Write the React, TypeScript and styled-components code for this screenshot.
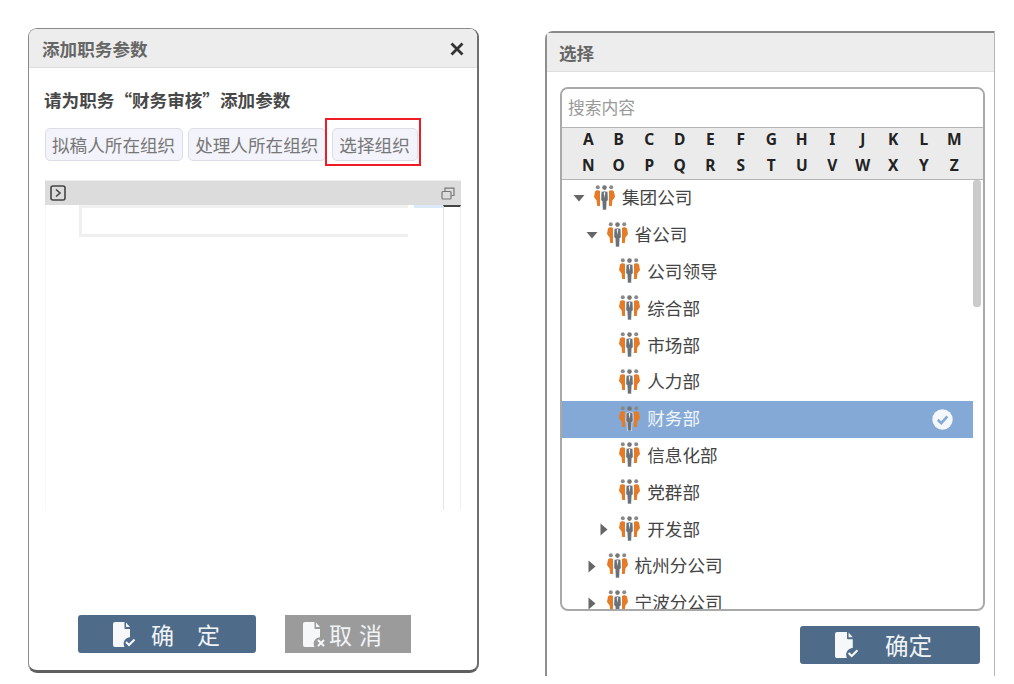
import React from "react";
import styled, { createGlobalStyle } from "styled-components";

const Global = createGlobalStyle`
  html, body { margin: 0; padding: 0; background: #fff; }
  body { font-family: "Noto Sans CJK SC", "Noto Sans", sans-serif; }
`;

const Page = styled.div`
  width: 1014px;
  height: 684px;
  box-sizing: border-box;
  padding: 28px 0 0 28px;
  display: flex;
  align-items: flex-start;
  overflow: hidden;
`;

const EditDialog = styled.section`
  width: 451px;
  height: 645px;
  box-sizing: border-box;
  display: flex;
  flex-direction: column;
  border: 1px solid #8a8a8a;
  border-right: 2px solid #6f6f6f;
  border-bottom: 3px solid #5f5f5f;
  border-radius: 9px;
  overflow: hidden;
  background: #fff;
`;

const PickDialog = styled.section`
  width: 450px;
  height: 645px;
  margin: 3px 0 0 66px;
  box-sizing: border-box;
  display: flex;
  flex-direction: column;
  border-left: 2px solid #8e8e8e;
  border-top: 2px solid #8a8a8a;
  border-right: 1px solid #b5b5b5;
  border-top-left-radius: 8px;
  background: #fff;
`;

const Header = styled.header<{ $inset: number }>`
  height: 39px;
  flex: none;
  box-sizing: border-box;
  background: #ededed;
  border-bottom: 1px solid #dedede;
  padding: 0 13px 0 ${(p) => p.$inset}px;
  display: flex;
  align-items: center;
  justify-content: space-between;
`;

const Title = styled.h2`
  margin: 0;
  font-size: 17.6px;
  font-weight: 700;
  color: #666;
`;

const CloseButton = styled.button`
  border: 0;
  padding: 0;
  margin: 2px 0 0 0;
  background: none;
  display: flex;
`;

const EditBody = styled.div`
  flex: 1;
  display: flex;
  flex-direction: column;
  padding: 20px 0 0 15px;
`;

const Prompt = styled.p`
  margin: 0;
  height: 24px;
  line-height: 24px;
  font-size: 17.6px;
  font-weight: 700;
  color: #484848;
`;

const ChipRow = styled.div`
  display: flex;
  gap: 5px;
  margin: 16px 0 0 1px;
`;

const Chip = styled.button<{ $marked?: boolean }>`
  position: relative;
  height: 33px;
  box-sizing: border-box;
  padding: 0 7px 0 6px;
  margin-left: ${(p) => (p.$marked ? 1 : 0)}px;
  border: 1px solid #dddde8;
  border-radius: 5px;
  background: #f3f3fb;
  color: #777;
  font-family: inherit;
  font-size: 17.6px;
  line-height: 30px;
  white-space: nowrap;
  ${(p) =>
    p.$marked &&
    `&::after {
      content: "";
      position: absolute;
      inset: -11px -4px -6px -8px;
      border: 2px solid #ee1c25;
    }`}
`;

const Panel = styled.div`
  width: 416px;
  height: 330px;
  margin: 19px 0 0 1px;
  display: flex;
  flex-direction: column;
`;

const PanelBar = styled.div`
  height: 25px;
  flex: none;
  box-sizing: border-box;
  border-top: 1px solid #f0f0f0;
  background: #dcdcdc;
  padding: 0 6px 0 5px;
  display: flex;
  align-items: center;
  justify-content: space-between;
`;

const PanelBody = styled.div`
  flex: 1;
  display: flex;
  border-left: 1px solid #f6f6f6;
`;

const Canvas = styled.div`
  flex: 1;
  display: flex;
  align-items: flex-start;
`;

const CanvasFrame = styled.div`
  width: 329px;
  height: 32px;
  box-sizing: border-box;
  margin-left: 33px;
  border-top: 3px solid #f1f1f1;
  border-left: 3px solid #efefef;
  border-bottom: 3px solid #efefef;
`;

const CanvasMark = styled.div`
  width: 29px;
  height: 3px;
  margin-left: 6px;
  background: #dce9fb;
`;

const SideRail = styled.div`
  width: 18px;
  flex: none;
  box-sizing: border-box;
  border-left: 1px solid #e6e6e6;
  border-right: 1px solid #efefef;
  border-top: 2px solid #444;
`;

const Actions = styled.div`
  margin: auto 0 17px 34px;
  display: flex;
  gap: 29px;
`;

const ActionButton = styled.button<{ $width: number; $tone: "blue" | "gray" }>`
  width: ${(p) => p.$width}px;
  height: 38px;
  border: 0;
  border-radius: ${(p) => (p.$tone === "blue" ? 3 : 0)}px;
  background: ${(p) => (p.$tone === "blue" ? "#4e6b89" : "#9b9b9b")};
  color: #f1f4f7;
  font-family: inherit;
  display: flex;
  align-items: center;
  padding: 0;
`;

const ConfirmWide = styled.span`
  font-size: 23px;
  letter-spacing: 23px;
  margin-left: 16px;
  line-height: 38px;
`;

const CancelLabel = styled.span`
  font-size: 23px;
  letter-spacing: 7px;
  margin-left: 4px;
  line-height: 38px;
`;

const ConfirmTight = styled.span`
  font-size: 23.5px;
  margin-left: 27px;
  line-height: 38px;
`;

const IconSlot = styled.span<{ $left: number }>`
  display: flex;
  margin-left: ${(p) => p.$left}px;
`;

const PickBody = styled.div`
  flex: 1;
  display: flex;
  flex-direction: column;
  padding: 15px 0 0 13px;
`;

const PickFrame = styled.div`
  width: 425px;
  height: 524px;
  box-sizing: border-box;
  border: 2px solid #a9a9a9;
  border-radius: 8px;
  display: flex;
  flex-direction: column;
  overflow: hidden;
`;

const SearchInput = styled.input`
  height: 38px;
  flex: none;
  box-sizing: border-box;
  border: 0;
  outline: 0;
  padding: 0 6px 2px;
  font-family: inherit;
  font-size: 16.8px;
  &::placeholder { color: #999; opacity: 1; }
`;

const AlphaGrid = styled.div`
  height: 53px;
  flex: none;
  box-sizing: border-box;
  background: #ebebeb;
  border-top: 1px solid #b5b5b5;
  border-bottom: 1px solid #b5b5b5;
  padding: 0 0 0 11px;
  display: grid;
  grid-template-columns: repeat(13, 30.5px);
  grid-auto-rows: 25.5px;
`;

const AlphaKey = styled.span`
  font-family: "Noto Sans", sans-serif;
  font-size: 15.5px;
  font-weight: 700;
  color: #222;
  text-align: center;
  line-height: 22px;
`;

const TreeArea = styled.div`
  flex: 1;
  min-height: 0;
  display: flex;
`;

const TreeList = styled.ul`
  width: 411px;
  flex: none;
  margin: 0;
  padding: 0;
  list-style: none;
  overflow: hidden;
`;

const TreeRow = styled.li<{ $level: number; $selected?: boolean }>`
  height: 36.8px;
  box-sizing: border-box;
  padding-left: ${(p) => 11 + p.$level * 12.6}px;
  padding-right: 20px;
  display: flex;
  align-items: center;
  background: ${(p) => (p.$selected ? "#84a9d6" : "transparent")};
  color: ${(p) => (p.$selected ? "#f2f6fb" : "#444")};
  font-size: 17.6px;
`;

const CaretSlot = styled.span`
  width: 21px;
  flex: none;
  display: flex;
`;

const RowLabel = styled.span`
  margin: -3px 0 0 7px;
  flex: 1;
  white-space: nowrap;
`;

const ScrollTrack = styled.div`
  width: 8px;
  flex: none;
`;

const ScrollThumb = styled.div`
  height: 127px;
  background: #cbcbcb;
  border-radius: 3px;
`;

const PickActions = styled.div`
  margin: 15px 0 0 240px;
  display: flex;
`;

const People = () => (
  <svg width="21" height="25" viewBox="0 0 21 25" style={{ flex: "none", marginTop: -2 }}>
    <circle cx="3.8" cy="2.2" r="2" fill="#8a8a8a" />
    <circle cx="10.5" cy="2.6" r="2.3" fill="#777" />
    <circle cx="17.2" cy="2.2" r="2" fill="#8a8a8a" />
    <path d="M1 6.5 C2.2 4.8 5 4.8 6 6 L6 21 L3.2 21 L2.6 15.5 L0 12 Z" fill="#e57b26" />
    <path d="M20 6.5 C18.8 4.8 16 4.8 15 6 L15 21 L17.8 21 L18.4 15.5 L21 12 Z" fill="#e57b26" />
    <path d="M7.2 6.8 Q10.5 5 13.8 6.8 L14.2 15.5 L12.9 16 L12.4 25 L8.6 25 L8.1 16 L6.8 15.5 Z" fill="#68707a" stroke="#fff" strokeWidth="0.6" />
    <path d="M10.5 6.2 L11.3 8 L10.5 13 L9.7 8 Z" fill="#e9ecef" />
  </svg>
);

const CaretDown = () => (
  <svg width="12" height="8" viewBox="0 0 12 8"><path d="M0.5 1 H11.5 L6 7.5 Z" fill="#666" /></svg>
);

const CaretRight = () => (
  <svg width="8" height="13" viewBox="0 0 8 13" style={{ marginLeft: 2 }}><path d="M0.5 0.5 V12.5 L7.5 6.5 Z" fill="#666" /></svg>
);

const CheckBadge = () => (
  <svg width="21" height="21" viewBox="0 0 21 21" style={{ flex: "none" }}>
    <circle cx="10.5" cy="10.5" r="10.2" fill="#f4f7fb" />
    <path d="M5.8 10.8 L9.3 14.2 L15.4 7.4" fill="none" stroke="#84a9d6" strokeWidth="2.6" />
  </svg>
);

const DocIcon = ({ badge, size = 22 }: { badge: "check" | "cross"; size?: number }) => (
  <svg width={size} height={(size * 25) / 22} viewBox="0 0 22 25">
    <path d="M2 0 H11.5 V6 Q11.5 7 12.5 7 H17 V15.3 A6.5 6.5 0 0 0 11.5 25 H2 Q0 25 0 23 V2 Q0 0 2 0 Z" fill="#f6f7f8" />
    <path d="M13 0.5 L17 5 H13 Z" fill="#f6f7f8" />
    {badge === "check" ? (
      <path d="M13 20 L16 23 L21.5 17.5" fill="none" stroke="#f6f7f8" strokeWidth="2" />
    ) : (
      <path d="M15 18 L21 24 M21 18 L15 24" fill="none" stroke="#f6f7f8" strokeWidth="2" />
    )}
  </svg>
);

const tree: { name: string; level: number; caret?: "down" | "right"; selected?: boolean }[] = [
  { name: "集团公司", level: 0, caret: "down" },
  { name: "省公司", level: 1, caret: "down" },
  { name: "公司领导", level: 2 },
  { name: "综合部", level: 2 },
  { name: "市场部", level: 2 },
  { name: "人力部", level: 2 },
  { name: "财务部", level: 2, selected: true },
  { name: "信息化部", level: 2 },
  { name: "党群部", level: 2 },
  { name: "开发部", level: 2, caret: "right" },
  { name: "杭州分公司", level: 1, caret: "right" },
  { name: "宁波分公司", level: 1, caret: "right" },
];

export default function App() {
  return (
    <Page>
      <Global />
      <EditDialog>
        <Header $inset={13}>
          <Title>添加职务参数</Title>
          <CloseButton aria-label="关闭">
            <svg width="14" height="14" viewBox="0 0 14 14">
              <path d="M1.5 1.5 L12.5 12.5 M12.5 1.5 L1.5 12.5" stroke="#333" strokeWidth="2.8" />
            </svg>
          </CloseButton>
        </Header>
        <EditBody>
          <Prompt>请为职务“财务审核”添加参数</Prompt>
          <ChipRow>
            <Chip>拟稿人所在组织</Chip>
            <Chip>处理人所在组织</Chip>
            <Chip $marked>选择组织</Chip>
          </ChipRow>
          <Panel>
            <PanelBar>
              <svg width="16" height="16" viewBox="0 0 16 16">
                <rect x="1" y="1" width="14" height="14" rx="2" fill="none" stroke="#444" strokeWidth="1.6" />
                <path d="M6 4.5 L10 8 L6 11.5" fill="none" stroke="#444" strokeWidth="1.6" />
              </svg>
              <svg width="14" height="13" viewBox="0 0 14 13">
                <rect x="1" y="4.5" width="9" height="7.5" rx="1" fill="none" stroke="#777" strokeWidth="1.2" />
                <path d="M4 4 V1.2 H13 V8.5 H10.5" fill="none" stroke="#777" strokeWidth="1.2" />
              </svg>
            </PanelBar>
            <PanelBody>
              <Canvas>
                <CanvasFrame />
                <CanvasMark />
              </Canvas>
              <SideRail />
            </PanelBody>
          </Panel>
          <Actions>
            <ActionButton $width={178} $tone="blue">
              <IconSlot $left={35}>
                <DocIcon badge="check" />
              </IconSlot>
              <ConfirmWide>确定</ConfirmWide>
            </ActionButton>
            <ActionButton $width={126} $tone="gray">
              <IconSlot $left={18}>
                <DocIcon badge="cross" />
              </IconSlot>
              <CancelLabel>取消</CancelLabel>
            </ActionButton>
          </Actions>
        </EditBody>
      </EditDialog>

      <PickDialog>
        <Header $inset={12}>
          <Title>选择</Title>
        </Header>
        <PickBody>
          <PickFrame>
            <SearchInput placeholder="搜索内容" />
            <AlphaGrid>
              {"ABCDEFGHIJKLMNOPQRSTUVWXYZ".split("").map((c) => (
                <AlphaKey key={c}>{c}</AlphaKey>
              ))}
            </AlphaGrid>
            <TreeArea>
              <TreeList>
                {tree.map((n) => (
                  <TreeRow key={n.name} $level={n.level} $selected={n.selected}>
                    <CaretSlot>
                      {n.caret === "down" && <CaretDown />}
                      {n.caret === "right" && <CaretRight />}
                    </CaretSlot>
                    <People />
                    <RowLabel>{n.name}</RowLabel>
                    {n.selected && <CheckBadge />}
                  </TreeRow>
                ))}
              </TreeList>
              <ScrollTrack>
                <ScrollThumb />
              </ScrollTrack>
            </TreeArea>
          </PickFrame>
          <PickActions>
            <ActionButton $width={180} $tone="blue">
              <IconSlot $left={35}>
                <DocIcon badge="check" size={23} />
              </IconSlot>
              <ConfirmTight>确定</ConfirmTight>
            </ActionButton>
          </PickActions>
        </PickBody>
      </PickDialog>
    </Page>
  );
}
